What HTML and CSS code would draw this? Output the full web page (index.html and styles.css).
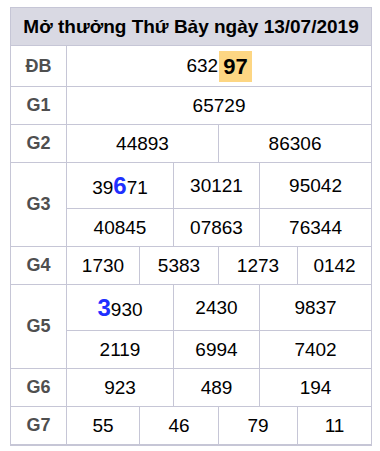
FILE: index.html
```html
<!DOCTYPE html>
<html>
<head>
  <meta charset="utf-8">
  <title>Kết quả xổ số</title>
  <link rel="stylesheet" href="styles.css">
</head>
<body>
  <div class="wrap">
    <table class="kq">
      <colgroup>
        <col class="c-label">
        <col style="width:73px">
        <col style="width:34px">
        <col style="width:45px">
        <col style="width:41px">
        <col style="width:38px">
        <col style="width:74px">
      </colgroup>
      <tr class="head">
        <th colspan="7">Mở thưởng Thứ Bảy ngày 13/07/2019</th>
      </tr>
      <tr class="row-db">
        <td class="label">ĐB</td>
        <td colspan="6">632<span class="hl">97</span></td>
      </tr>
      <tr>
        <td class="label">G1</td>
        <td colspan="6">65729</td>
      </tr>
      <tr>
        <td class="label">G2</td>
        <td colspan="3">44893</td>
        <td colspan="3">86306</td>
      </tr>
      <tr class="tall">
        <td class="label" rowspan="2">G3</td>
        <td colspan="2">39<span class="blue">6</span>71</td>
        <td colspan="2">30121</td>
        <td colspan="2">95042</td>
      </tr>
      <tr>
        <td colspan="2">40845</td>
        <td colspan="2">07863</td>
        <td colspan="2">76344</td>
      </tr>
      <tr>
        <td class="label">G4</td>
        <td>1730</td>
        <td colspan="2">5383</td>
        <td colspan="2">1273</td>
        <td>0142</td>
      </tr>
      <tr class="tall">
        <td class="label" rowspan="2">G5</td>
        <td colspan="2"><span class="blue">3</span>930</td>
        <td colspan="2">2430</td>
        <td colspan="2">9837</td>
      </tr>
      <tr>
        <td colspan="2">2119</td>
        <td colspan="2">6994</td>
        <td colspan="2">7402</td>
      </tr>
      <tr>
        <td class="label">G6</td>
        <td colspan="2">923</td>
        <td colspan="2">489</td>
        <td colspan="2">194</td>
      </tr>
      <tr class="last">
        <td class="label">G7</td>
        <td>55</td>
        <td colspan="2">46</td>
        <td colspan="2">79</td>
        <td>11</td>
      </tr>
    </table>
  </div>
</body>
</html>
```

FILE: styles.css
```css
body {
  margin: 0;
  padding: 0;
  background-color: #ffffff;
  font-family: Arial, "Liberation Sans", sans-serif;
}

.wrap {
  padding: 7px 0 0 10px;
}

.kq {
  border-collapse: collapse;
  table-layout: fixed;
  width: 362px;
  color: #000;
}

.kq .c-label {
  width: 56px;
}

.kq th,
.kq td {
  border: 1px solid #c6c6d6;
  text-align: center;
  padding: 0;
  height: 37px;
  font-size: 19px;
}

.kq .head th {
  background-color: #d9d9e3;
  font-weight: bold;
  font-size: 19px;
  height: 37px;
}

.kq .row-db td {
  height: 40px;
}

.kq .tall td {
  height: 45px;
}

.kq td.label {
  color: #4f4f4f;
  font-weight: bold;
  font-size: 18px;
}

.kq .hl {
  display: inline-block;
  background-color: #fdd683;
  font-weight: bold;
  font-size: 22px;
  line-height: 31px;
  padding: 0 4px;
  margin-left: 1px;
  vertical-align: middle;
}

.kq .blue {
  color: #1f30ff;
  font-weight: bold;
  font-size: 24px;
}

.kq .last td {
  border-bottom: 2px solid #c6c6d6;
}
```
